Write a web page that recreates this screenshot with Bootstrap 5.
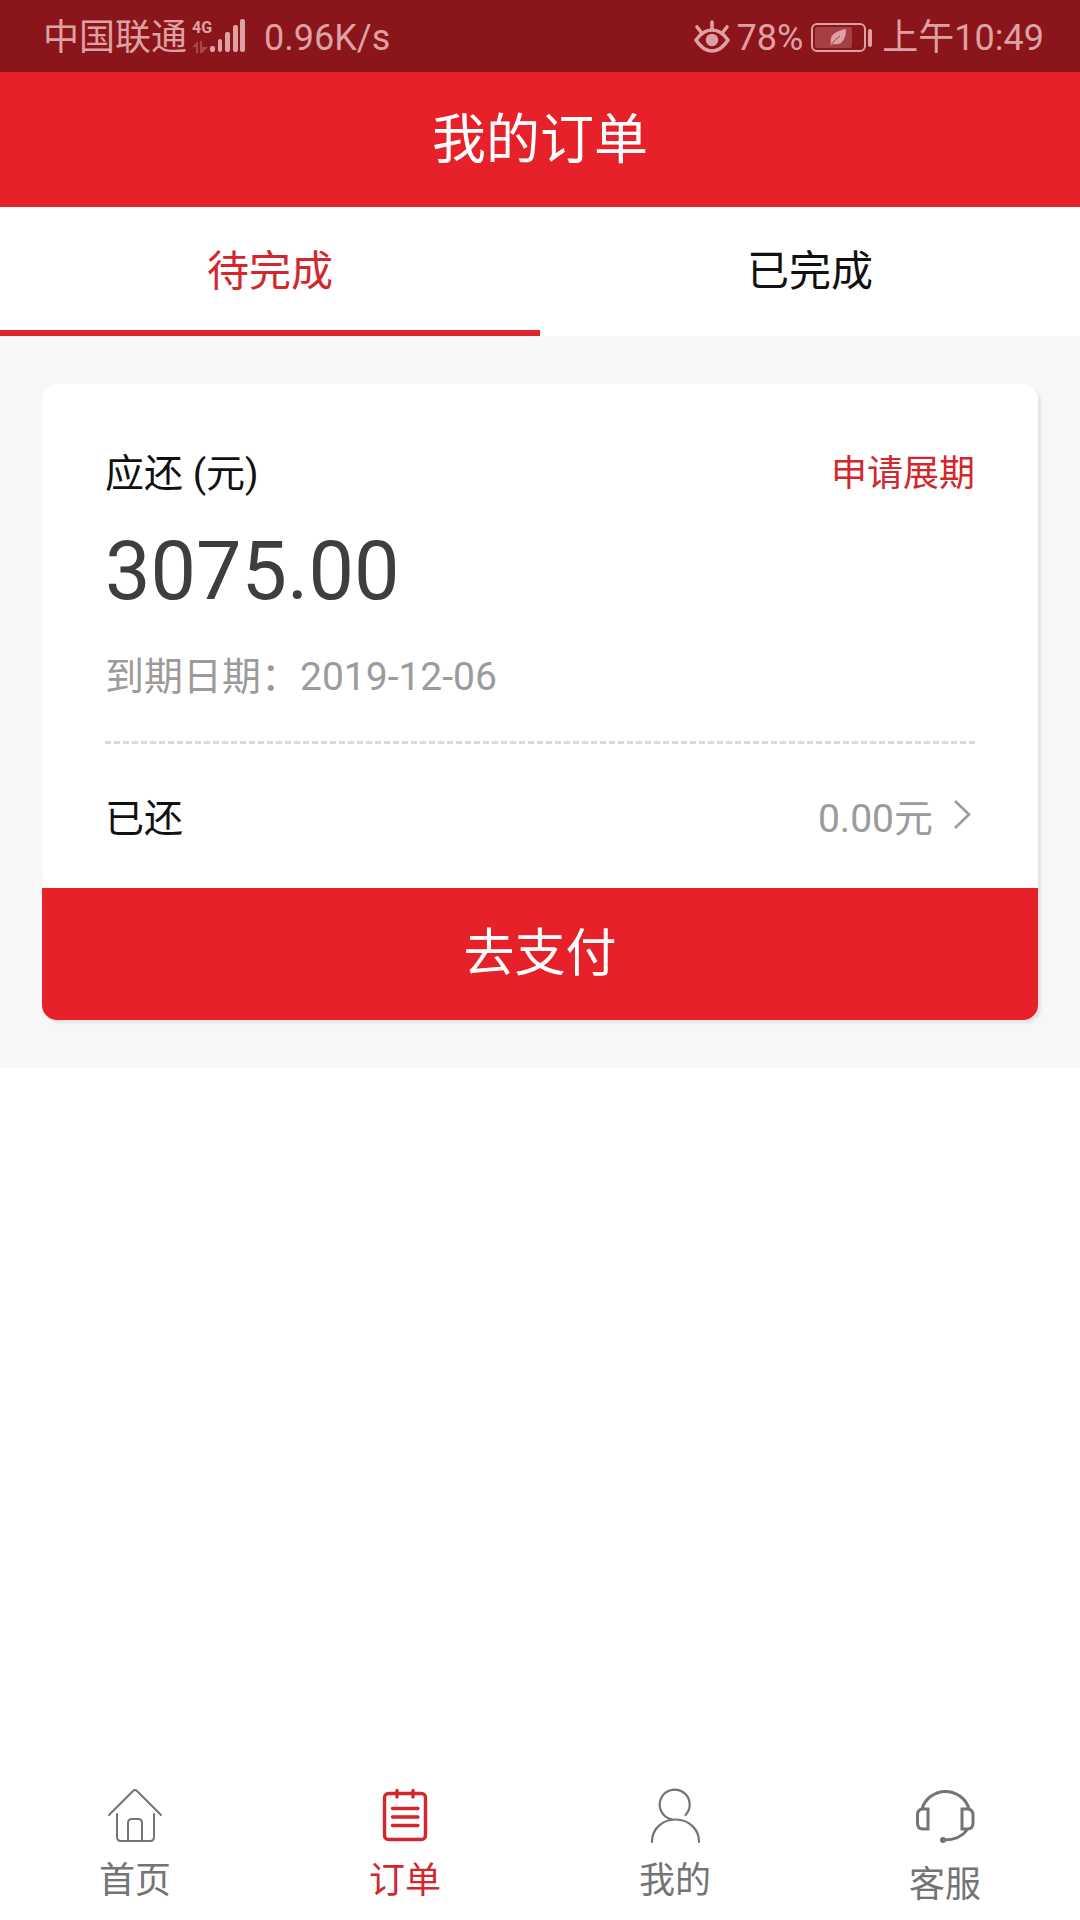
<!DOCTYPE html>
<html lang="zh-CN">
<head>
<meta charset="utf-8">
<meta name="viewport" content="width=device-width, initial-scale=1">
<title>我的订单</title>
<link href="https://cdn.jsdelivr.net/npm/bootstrap@5.3.0/dist/css/bootstrap.min.css" rel="stylesheet">
<style>
  :root { --brand: #e62129; --accent: #d3262d; --ink: #111; --muted: #9b9b9b; --nav: #747474; }
  body { font-family: Roboto, "Noto Sans CJK SC", sans-serif; color: var(--ink); background: #fff; font-size: 39px; line-height: 54px; }
  svg { display: block; flex: none; }
  a { text-decoration: none; }

  .status-bar { background: #8a151a; color: #dfa0a3; font-size: 36px; line-height: 48px; padding: 14px 36px 10px 43px; }
  .signal-icon { margin: 0 18px 0 5px; }
  .eye-icon { margin-right: 7px; }
  .battery-icon { margin: 0 9px 0 8px; }

  .page-title { background: var(--brand); font-size: 54px; line-height: 75px; padding: 31px 0 29px; }

  .order-tabs .nav-link { color: var(--ink); font-size: 42px; line-height: 60px; padding: 35px 0 28px; border: 0; border-bottom: 6px solid transparent; border-radius: 0; }
  .order-tabs .nav-link.active { color: var(--accent); background: none; border-color: #dd262c; }

  .order-area { background: #f7f7f7; padding: 48px 42px; }
  .order-card { border: 0; border-radius: 15px; background: #fbfbfb; box-shadow: 3px 3px 3px rgba(0,0,0,.08); }
  .order-info { background: #fff; border-radius: 15px; padding: 63px 63px 42px; }
  .extend-link { color: var(--accent); font-size: 36px; }
  .amount { color: #3e3e3e; font-size: 81px; line-height: 96px; margin: 23px 0 30px; }
  .muted-text { color: var(--muted); }
  .split { border-top: 3px dashed #dadada; margin: 37px 0 48px; }
  .chevron { margin-left: 18px; }
  .pay-btn { background: var(--brand); color: #fff; font-size: 51px; line-height: 66px; padding: 33px 0; border: 0; border-radius: 0 0 15px 15px; }
  .pay-btn:hover { background: #c91b22; color: #fff; }

  .tab-bar { padding-bottom: 8px; }
  .tab-bar a { color: var(--nav); font-size: 36px; gap: 9px; }
  .tab-bar a.current { color: var(--accent); }
</style>
<script src="https://cdn.jsdelivr.net/npm/bootstrap@5.3.0/dist/js/bootstrap.bundle.min.js" defer></script>
</head>
<body class="d-flex flex-column min-vh-100">

<div class="status-bar d-flex justify-content-between">
  <div class="d-flex align-items-center">
    <span>中国联通</span>
    <svg class="signal-icon" width="54" height="38" viewBox="0 0 54 38" fill="currentColor" aria-hidden="true">
      <text x="0" y="14" font-size="16" font-weight="700">4G</text>
      <g opacity=".35"><path d="M4 34V28H0L6 22V34ZM8 34V22H10V28H16L10 34Z"/></g>
      <rect x="18" y="27" width="5" height="6" rx="2"/>
      <rect x="26" y="20" width="4" height="13" rx="2"/>
      <rect x="33" y="13" width="5" height="20" rx="2"/>
      <rect x="41" y="6" width="5" height="27" rx="2"/>
      <rect x="48" y="0" width="5" height="33" rx="2"/>
    </svg>
    <span>0.96K/s</span>
  </div>
  <div class="d-flex align-items-center">
    <svg class="eye-icon" width="36" height="36" viewBox="0 0 36 36" fill="none" stroke="currentColor" stroke-width="3.6" stroke-linecap="round" aria-hidden="true">
      <path d="M2 20Q9 10 18 10T34 20Q27 31 18 31T2 20Z" stroke-linejoin="round"/>
      <circle cx="18" cy="20" r="6.2" fill="currentColor" stroke="none"/>
      <path d="M18 9V2M7 12L3 7M29 12L33 7"/>
    </svg>
    <span>78%</span>
    <svg class="battery-icon" width="62" height="30" viewBox="0 0 62 30" fill="none" aria-hidden="true">
      <rect x="1" y="1" width="53" height="27" rx="5" stroke="currentColor" stroke-width="2"/>
      <rect x="4" y="4" width="37" height="21" rx="2" fill="#a63f45"/>
      <rect x="57" y="6" width="4" height="18" rx="2" fill="currentColor"/>
      <path d="M35 6C25 8 18 12 20 20L19 22C20 23 21 22 22 21C31 23 35 16 35 6Z" fill="currentColor"/>
      <path d="M20 22Q24 16 29 13" stroke="#a63f45"/>
    </svg>
    <span>上午10:49</span>
  </div>
</div>

<header>
  <h1 class="page-title text-white text-center fw-normal m-0">我的订单</h1>
</header>

<nav class="order-tabs nav nav-pills nav-justified" aria-label="订单状态">
  <a class="nav-link active" href="#pending" aria-current="page">待完成</a>
  <a class="nav-link" href="#done">已完成</a>
</nav>

<main class="order-area" id="pending">
  <section class="card order-card">
    <div class="order-info">
      <div class="d-flex justify-content-between">
        <span>应还 (元)</span>
        <a class="extend-link" href="#extend">申请展期</a>
      </div>
      <p class="amount">3075.00</p>
      <div class="muted-text">到期日期：2019-12-06</div>
      <div class="split"></div>
      <div class="d-flex justify-content-between">
        <span>已还</span>
        <a class="muted-text d-flex" href="#repaid">0.00元
          <svg class="chevron" width="24" height="54" viewBox="0 0 24 54" fill="none" stroke="currentColor" stroke-width="2.6" aria-hidden="true"><path d="M4 9L18 22.500L4 36"/></svg>
        </a>
      </div>
    </div>
    <button type="button" class="btn pay-btn w-100">去支付</button>
  </section>
</main>

<nav class="tab-bar row g-0 text-center mt-auto" aria-label="主导航">
  <a class="col d-flex flex-column align-items-center" href="#home">
    <svg width="60" height="60" viewBox="0 0 60 60" fill="none" stroke="currentColor" stroke-width="2" stroke-linecap="round" aria-hidden="true">
      <path d="M4 30L28 6Q30 4 32 6L56 30M12 29V52Q12 56 16 56H45Q49 56 49 52V29M23 55V38Q23 34 27 34H33Q37 34 37 38V55"/>
    </svg>
    <span>首页</span>
  </a>
  <a class="col d-flex flex-column align-items-center current" href="#orders" aria-current="page">
    <svg width="60" height="60" viewBox="0 0 60 60" fill="none" stroke="currentColor" stroke-width="3.4" stroke-linecap="round" aria-hidden="true">
      <rect x="9.500" y="8.500" width="41" height="46" rx="4"/>
      <path d="M22 5.500V12M38 5.500V12M17.500 23.500H43M17.500 32H43M17.500 40.500H43"/>
    </svg>
    <span>订单</span>
  </a>
  <a class="col d-flex flex-column align-items-center" href="#mine">
    <svg width="60" height="60" viewBox="0 0 60 60" fill="none" stroke="currentColor" stroke-width="2.2" stroke-linecap="round" aria-hidden="true">
      <path d="M40.500 30A15 15 0 1 0 28 34.500M7 57C7 44 17 34.500 30.500 34.500S54 44 54 57"/>
    </svg>
    <span>我的</span>
  </a>
  <a class="col d-flex flex-column align-items-center" href="#service">
    <svg width="60" height="64" viewBox="0 0 60 64" fill="none" stroke="currentColor" stroke-width="3" stroke-linecap="round" aria-hidden="true">
      <path d="M7 24A24.500 24.500 0 0 1 54 24M13 24H8Q2.500 24 2.500 30V38Q2.500 44 8 44H13ZM47 24H52Q58 24 58 30V38Q58 44 52 44H47ZM52 45C47 52 39 55 29 55"/>
      <circle cx="28" cy="55" r="3" fill="currentColor" stroke="none"/>
    </svg>
    <span>客服</span>
  </a>
</nav>

</body>
</html>
